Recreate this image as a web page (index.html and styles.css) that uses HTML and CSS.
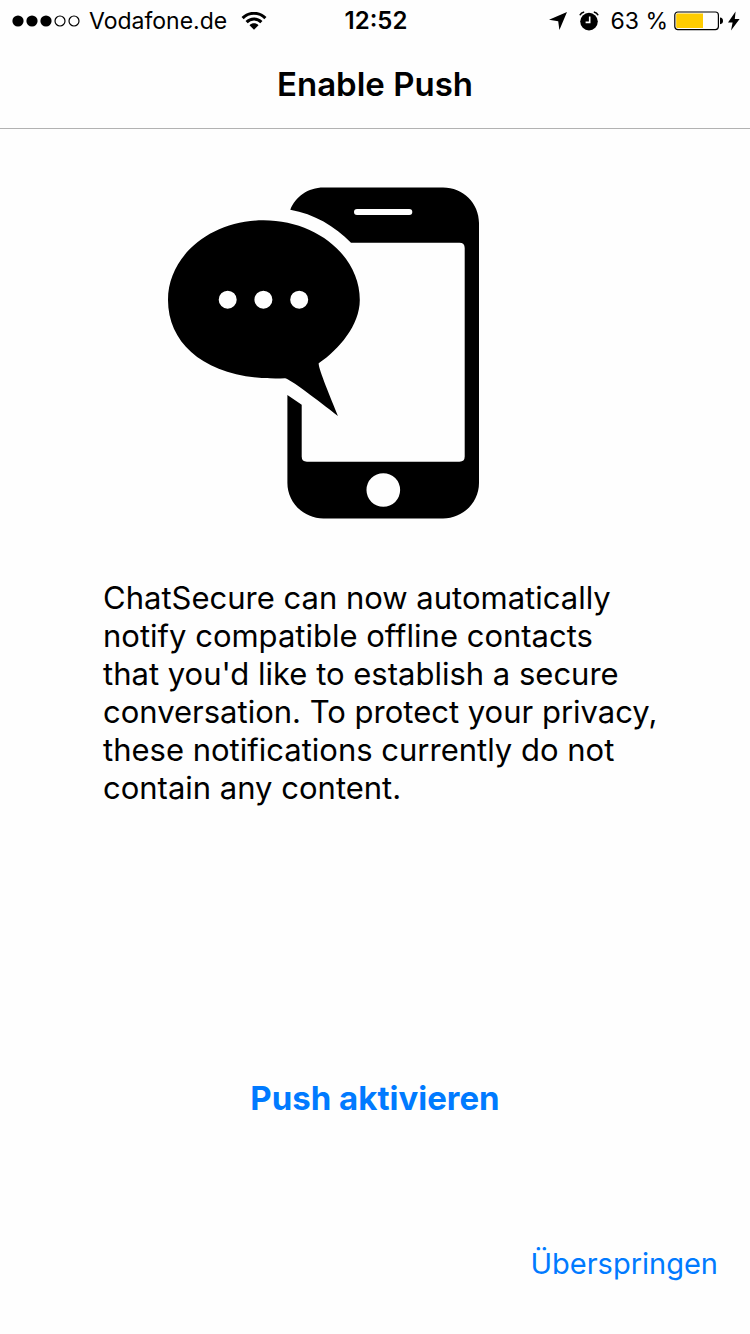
FILE: index.html
```html
<!DOCTYPE html>
<html lang="de">
<head>
<meta charset="utf-8">
<meta name="viewport" content="width=device-width, initial-scale=1">
<title>Enable Push</title>
<link rel="stylesheet" href="styles.css">
</head>
<body class="screen">
<div class="status">
  <div class="status-side">
    <svg class="signal" width="68" height="12" viewBox="0 0 68 12" aria-hidden="true">
      <circle cx="6" cy="6" r="5.6"/><circle cx="20" cy="6" r="5.6"/><circle cx="34" cy="6" r="5.6"/>
      <circle class="ring" cx="48" cy="6" r="5"/><circle class="ring" cx="62" cy="6" r="5"/>
    </svg>
    <span class="carrier">Vodafone.de</span>
    <svg class="wifi" width="26" height="18" viewBox="0 0 26 18" aria-hidden="true">
      <path class="arc" d="M1.6 6.1C7.8-.3 18.2-.3 24.4 6.1"/>
      <path class="arc" d="M5.6 10.1C9.7 5.9 16.3 5.9 20.4 10.1"/>
      <path d="M13 17.8 8.5 13.2C11 10.7 15 10.7 17.5 13.2Z"/>
    </svg>
  </div>
  <time class="clock">12:52</time>
  <div class="status-side status-right">
    <svg width="18" height="18" viewBox="0 0 18 18" aria-hidden="true"><path d="M18 0 10.4 18 9.2 9.2 0 7.8Z"/></svg>
    <svg class="alarm" width="20" height="20" viewBox="0 0 20 20" aria-hidden="true">
      <circle cx="10" cy="10.6" r="8.8"/>
      <path class="bell" d="M.9 4.2Q2 1.7 5.2 1M19.1 4.2Q18 1.7 14.8 1"/>
      <path class="hands" d="M10.7 5.6V11.4H6.6"/>
    </svg>
    <span class="percent">63 %</span>
    <svg class="battery" width="50" height="20" viewBox="0 0 50 20" aria-hidden="true">
      <rect class="case" x=".8" y="1" width="43.6" height="17.6" rx="3"/>
      <path class="charge" d="M3.4 2.6H29V17H3.4Q2.2 17 2.2 15.8V3.8Q2.2 2.6 3.4 2.6Z"/>
      <path d="M46 6.4Q49 6.6 49 9.8T46 13.2Z"/>
    </svg>
    <svg width="12" height="20" viewBox="0 0 12 20" aria-hidden="true"><path d="M7.6.4 0 11.4H4.6L3 19.6 11.6 8H6.8Z"/></svg>
  </div>
</div>
<header class="navbar"><h1 class="title">Enable Push</h1></header>
<main class="content">
  <svg class="picture" width="312" height="332" viewBox="0 0 312 332" aria-hidden="true">
    <path fill-rule="evenodd" d="M122.3 22.7C127.500 9.500 140 .4 155.500 .4H275C295 .4 311 16 311 36V296C311 315.500 295 331.400 275 331.400H155.500C135.500 331.400 119.400 315.500 119.400 296V208L133.700 217.700V269.500Q133.700 274.700 138.900 274.700H291.500Q296.700 274.700 296.700 269.500V61Q296.700 55.800 291.500 55.800H183C167 39 146 27 122.300 22.700ZM189 22A3 3 0 0 0 189 28H241.300A3 3 0 0 0 241.300 22ZM215.300 286.200A16.800 16.800 0 1 0 215.300 319.800A16.800 16.800 0 1 0 215.300 286.200Z"/>
    <path fill-rule="evenodd" d="M95.500 33.300C43 33.300 0 68.500 0 113C0 161 44 194.500 117 191.300C121 191.300 150 213.500 169.900 228.900C163 211.500 150 181 150.700 176.300C171 162.500 191.800 138 191.800 113C191.800 68.500 148 33.300 95.500 33.300ZM59.700 103.700A9 9 0 1 0 59.700 121.700A9 9 0 1 0 59.700 103.700ZM95.400 103.700A9 9 0 1 0 95.400 121.700A9 9 0 1 0 95.400 103.700ZM131.200 103.700A9 9 0 1 0 131.200 121.700A9 9 0 1 0 131.200 103.700Z"/>
  </svg>
  <p class="message">ChatSecure can now automatically<br>
    notify compatible offline contacts<br>
    that you'd like to establish a secure<br>
    conversation. To protect your privacy,<br>
    these notifications currently do not<br>
    contain any content.</p>
</main>
<footer class="actions">
  <button class="button primary" type="button">Push aktivieren</button>
  <button class="button skip" type="button">Überspringen</button>
</footer>
</body>
</html>
```
FILE: styles.css
```css
* { box-sizing: border-box; }

.screen {
  margin: 0;
  min-height: 100vh;
  display: flex;
  flex-direction: column;
  background: #fefefe;
  color: #000;
  font-family: Inter, "Liberation Sans", sans-serif;
}

.status {
  display: grid;
  grid-template-columns: 1fr auto 1fr;
  align-items: center;
  height: 40px;
  padding: 2px 10px 0 12px;
  font-size: 23px;
  line-height: 28px;
}
.status-side { display: flex; align-items: center; white-space: nowrap; }
.status-right { justify-content: flex-end; }
.carrier { margin: 0 14px 0 9px; }
.clock { font-size: 24px; font-weight: 600; }
.alarm { margin: 0 11px 0 12px; }
.battery { margin: 0 4px 0 6px; }
.ring, .case { fill: none; stroke: #000; stroke-width: 1.2; }
.arc { fill: none; stroke: #000; stroke-width: 3; }
.bell { fill: none; stroke: #000; stroke-width: 1.6; }
.hands { fill: none; stroke: #fefefe; stroke-width: 1.6; }
.charge { fill: #fc0; }

.navbar {
  display: flex;
  align-items: center;
  justify-content: center;
  height: 89px;
  border-bottom: 1px solid #b2b2b2;
}
.title { margin: 0; font-size: 33px; line-height: 40px; font-weight: 600; }

.content {
  flex: 1;
  width: 100%;
  max-width: 592px;
  margin: 0 auto;
  padding: 58px 0 0 24px;
}
.picture { display: block; max-width: 100%; margin-left: 65px; }
.message { margin: 60px 0 0; font-size: 31px; line-height: 38px; }

.actions {
  display: flex;
  flex-direction: column;
  align-items: center;
  gap: 126px;
  padding: 0 32px 50px;
}
.button {
  padding: 0;
  border: 0;
  background: none;
  color: #007aff;
  font-family: inherit;
  line-height: 40px;
  cursor: pointer;
}
.primary { font-size: 33px; font-weight: 700; }
.skip { align-self: flex-end; font-size: 29px; }
```
